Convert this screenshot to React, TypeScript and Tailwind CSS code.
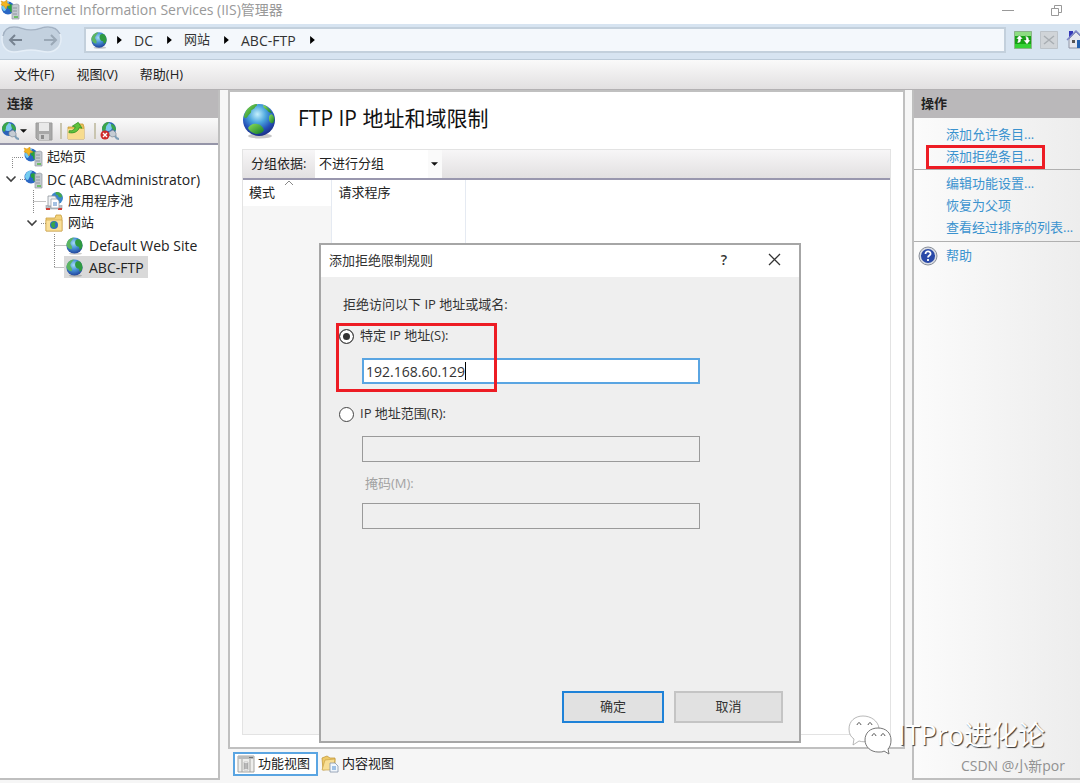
import { useState } from 'react';

type IconProps = { className?: string };

function Globe({ className = 'size-5' }: IconProps) {
  return (
    <svg viewBox="0 0 34 36" className={className} aria-hidden="true">
      <defs>
        <radialGradient id="sea" cx="45%" cy="32%" r="68%">
          <stop offset="0" stopColor="#c4f0fc" />
          <stop offset="0.4" stopColor="#4aa5dd" />
          <stop offset="0.75" stopColor="#2450b8" />
          <stop offset="1" stopColor="#1b2f86" />
        </radialGradient>
        <linearGradient id="land" x1="0" y1="0" x2="1" y2="1">
          <stop offset="0" stopColor="#8fe05a" />
          <stop offset="1" stopColor="#0f7a26" />
        </linearGradient>
      </defs>
      <ellipse cx="18" cy="33" rx="12" ry="2.5" fill="#000" opacity="0.22" />
      <circle cx="17" cy="17" r="16" fill="url(#sea)" />
      <path d="M2 14C3 7 8 2 14 1c2 0 1 2-1 3 0 2-3 2-4 4 1 2-2 3-3 5-1 2-3 3-4 1z" fill="url(#land)" />
      <path d="M28 12c2-2 3 0 4 2 1 2 0 5-1 6-2 1-4-1-4-4 0-2 0-3 1-4z" fill="url(#land)" />
      <path d="M6 25c2-3 5-5 9-4 3 0 6 3 7 6-1 3-5 4-8 4-4-1-7-3-8-6z" fill="url(#land)" />
      <path d="M21 2c4 1 7 4 9 8-2 0-4-1-5-3-2-1-4-3-4-5z" fill="url(#land)" />
    </svg>
  );
}

function SmallGlobe({ className = 'size-5' }: IconProps) {
  return (
    <svg viewBox="0 0 20 20" className={className} aria-hidden="true">
      <defs>
        <radialGradient id="smallSea" cx="45%" cy="35%" r="65%">
          <stop offset="0" stopColor="#a6dcf5" />
          <stop offset="0.5" stopColor="#4690d6" />
          <stop offset="1" stopColor="#22459c" />
        </radialGradient>
      </defs>
      <ellipse cx="11" cy="18.500" rx="7" ry="1.300" fill="#000" opacity="0.2" />
      <circle cx="10" cy="10" r="8.500" fill="url(#smallSea)" />
      <path d="M1.500 9C2 5 5 2 9 1.500c1 1-2 2-2 3.500-1 1-2 2-1 4 1 1 2 3 1 5-3 0-5-2-5.500-5z" fill="#5bb562" />
      <path d="M11 5c1-2 4-2 5-1 2 2 3 5 2 8-1 2-3 3-3 1s-1-2-2-2c-2-1-3-4-2-6z" fill="#2f9a40" />
    </svg>
  );
}

function ServerIcon({ className = 'size-5', star = false }: IconProps & { star?: boolean }) {
  return (
    <svg viewBox="0 0 20 20" className={className} aria-hidden="true">
      <circle cx="8" cy="8" r="6.5" fill="#2a67c4" />
      <path d="M2 7c1-4 4-6 7-5 0 2-2 2-2 4s-1 3-2 5c-2 0-3-2-3-4z" fill="#74cdf0" />
      <path d="M8 5c2-1 4-1 5 1v6c-3 1-3-1-3-3-2 0-3-2-2-4z" fill="#27a03f" />
      {star && <path d="M1 1l3 1 3-2v3l3 2-3 1-1 3-2-3-3-1 1-2z" fill="#f3b521" stroke="#d18f10" strokeWidth="0.5" />}
      <path d="M12 5l5-1 2 1v14h-7z" fill="#c3c9cf" stroke="#939aa1" strokeWidth="0.7" />
      <path d="M13 8h4M13 11h4M13 14h4" stroke="#828b94" strokeWidth="0.8" />
      <path d="M14 17h4" stroke="#54b948" strokeWidth="1.500" />
    </svg>
  );
}

function PoolIcon() {
  return (
    <svg viewBox="0 0 20 20" className="size-5" aria-hidden="true">
      <circle cx="13" cy="7" r="6" fill="#3b86ca" />
      <path d="M12 1c4 0 6 2 6 5-2 1-4 0-4-2-2 0-3-1-2-3z" fill="#46a84b" />
      <path d="M2 14v4h16v-4" fill="#b9c0c7" stroke="#9aa2aa" strokeWidth="0.6" />
      <path d="M2 17h4v2H2zM14 17h4v2h-4z" fill="#cf3d35" />
      <path d="M4 5h7l2 3v7H4z" fill="#f1f3f5" stroke="#8f969d" strokeWidth="0.8" />
      <path d="M7 8h6l2 2v7H7z" fill="#fff" stroke="#9aa2aa" strokeWidth="0.8" />
      <path d="M9 12h4M9 14h4" stroke="#4a83c4" />
    </svg>
  );
}

function SitesIcon() {
  return (
    <svg viewBox="0 0 20 20" className="size-5" aria-hidden="true">
      <path d="M2 5h9l1-3h5l1 3v13H2z" fill="#f3d27a" stroke="#c9a040" strokeWidth="0.8" />
      <path d="M2 7h16v11H2z" fill="#fae09a" stroke="#c9a040" strokeWidth="0.6" />
      <circle cx="10" cy="12" r="4" fill="#2e6fc0" />
      <path d="M7 11c1-2 3-3 5-2-1 1-2 2-1 3 1 2-1 3-2 3-1-1-2-2-2-4z" fill="#38a548" />
    </svg>
  );
}

function ConnectIcon({ remove = false }: { remove?: boolean }) {
  return (
    <svg viewBox="0 0 20 20" className="size-5" aria-hidden="true">
      <circle cx="9" cy="8" r="7" fill="#2b62ba" />
      <circle cx="8" cy="6" r="4" fill="#7cc8ee" />
      <path d="M2 7c1-4 4-6 7-6 0 2-3 3-3 5 0 3-1 4-2 5-1-1-2-2-2-4z" fill="#3aa54a" />
      <path d="M11 3c3 0 5 3 5 6-2 2-5-2-5-6z" fill="#3aa54a" />
      <path d="M9 11l4-2 3 3v3l-4 1-3-2z" fill="#c5ccd4" stroke="#7d8893" strokeWidth="0.7" />
      <path d="M15 15c1 2 2 3 4 3" stroke="#7fa0b8" strokeWidth="2" fill="none" />
      {remove && (
        <g>
          <circle cx="5" cy="14" r="4.5" fill="#cf2a2a" />
          <path d="M3 12l4 4m0-4l-4 4" stroke="#fff" strokeWidth="1.4" />
        </g>
      )}
    </svg>
  );
}

function SaveIcon() {
  return (
    <svg viewBox="0 0 20 20" className="size-5" aria-hidden="true">
      <path d="M2 2h16v17H4l-2-2z" fill="#a8a8a8" stroke="#9a9a9a" />
      <path d="M5 2h10v8H5z" fill="#e9e9e9" />
      <path d="M5 13h10v6H5z" fill="#cfcfcf" />
      <path d="M7 14h3v4H7z" fill="#8c8c8c" />
    </svg>
  );
}

function FolderUpIcon() {
  return (
    <svg viewBox="0 0 20 20" className="size-5" aria-hidden="true">
      <path d="M2 6h8l2-3h5l1 3v12H2z" fill="#e9c15d" stroke="#c79b35" strokeWidth="0.8" />
      <path d="M2 8h16v10H2z" fill="#f7dc8e" />
      <path d="M4 11c3 0 5-2 5-5H6l5-5 5 5h-3c0 4-4 7-9 7z" fill="#5fc23c" stroke="#2f8f22" strokeWidth="0.7" transform="rotate(12 10 7)" />
    </svg>
  );
}

function WeChatIcon() {
  return (
    <svg viewBox="0 0 44 40" className="h-10 w-11" aria-hidden="true">
      <path d="M15 1C7 1 1 6 1 14c0 5 2 8 5 10l-1 6 6-4c3 1 7 1 10 0L31 13C30 6 23 1 15 1z" fill="#fff" stroke="#9a9a9a" strokeWidth="0.7" />
      <path d="M30 13c-8 0-13 5-13 12s6 12 13 12c3 0 5 0 6-1l5 3-1-5c2-2 3-5 3-9 0-7-5-12-13-12z" fill="#fff" stroke="#666" strokeWidth="0.9" />
      <path d="M9 10c1-3 3-3 4 0M20 10c1-3 3-3 4 0M24 21c1-3 3-3 4 0M33 21c1-3 3-3 4 0" stroke="#555" fill="none" />
    </svg>
  );
}

function Arrow({ className = '' }: IconProps) {
  return (
    <svg viewBox="0 0 6 10" className={`h-2 w-[5px] shrink-0 ${className}`} aria-hidden="true">
      <path d="M0 0l6 5-6 5z" fill="#000" />
    </svg>
  );
}

function DownArrow() {
  return (
    <svg viewBox="0 0 8 4" className="h-1 w-[7px] shrink-0" aria-hidden="true">
      <path d="M0 0h8L4 4z" fill="#111" />
    </svg>
  );
}

function Chevron() {
  return (
    <svg viewBox="0 0 12 8" className="h-2 w-3" aria-hidden="true">
      <path d="M1.500 1.500L6 6l4.500-4.500" stroke="#404040" strokeWidth="1.600" fill="none" />
    </svg>
  );
}

function TitleBar() {
  return (
    <header className="flex h-6 items-center bg-white pb-1 text-[#999]">
      <ServerIcon className="size-5 shrink-0" star />
      <h1 className="ml-[3px] whitespace-nowrap text-[14px] leading-5">Internet Information Services (IIS)管理器</h1>
      <div className="ml-auto flex items-center gap-9 pr-[17px]">
        <button type="button" aria-label="最小化" className="flex h-5 w-3 items-center">
          <span className="h-px w-3 bg-[#999]" />
        </button>
        <button type="button" aria-label="还原">
          <svg viewBox="0 0 13 13" className="size-[13px]" fill="none" stroke="#999">
            <path d="M1.500 4.500h7v7h-7zM4.500 4V1.500h7v7H9" />
          </svg>
        </button>
      </div>
    </header>
  );
}

function AddressBar() {
  return (
    <nav className="flex h-9 items-center border-b border-[#bccbd9] bg-[#d7e4f1] pb-[3px]">
      <div className="relative h-7 w-[62px] shrink-0">
        <svg viewBox="0 0 62 28" className="absolute inset-0 h-7 w-[62px]" aria-hidden="true">
          <path d="M14 1c7 0 9 3 17 3s10-3 17-3c8 0 13 5 13 12s-5 13-13 13c-7 0-9-2-17-2s-10 2-17 2C7 26 2 21 2 13S7 1 14 1z" fill="#c3d1df" stroke="#e5eef7" strokeWidth="1.500" />
          <path d="M3 10C4 4 8 1 14 1c7 0 9 3 17 3s10-3 17-3c6 0 10 3 12 7" stroke="#a3b2c3" strokeWidth="1.500" fill="none" />
        </svg>
        <div className="relative flex h-full items-center justify-between px-2">
          <button type="button" aria-label="后退">
            <svg viewBox="0 0 14 12" className="h-3 w-[14px]" fill="none" stroke="#778391" strokeWidth="2">
              <path d="M14 6H1.500M7 1L2 6l5 5" />
            </svg>
          </button>
          <button type="button" aria-label="前进" className="-mr-1">
            <svg viewBox="0 0 14 12" className="h-3 w-[14px]" fill="none" stroke="#9aa8b6" strokeWidth="2">
              <path d="M0 6h12.500M7 1l5 5-5 5" />
            </svg>
          </button>
        </div>
      </div>
      <div className="ml-[22px] flex h-[26px] flex-1 items-center border-2 border-[#c3d0dc] bg-[#f4f8fc] pl-1 text-[14px] text-[#333]">
        <SmallGlobe className="size-[18px]" />
        <Arrow className="ml-[9px]" />
        <a href="#dc" className="ml-3">DC</a>
        <Arrow className="ml-[14px]" />
        <a href="#sites" className="ml-3 text-[13px]">网站</a>
        <Arrow className="ml-[14px]" />
        <a href="#ftp" className="ml-3">ABC-FTP</a>
        <Arrow className="ml-[14px]" />
      </div>
      <div className="flex w-[74px] shrink-0 items-center gap-2 overflow-hidden pl-2">
        <button type="button" aria-label="刷新" className="shrink-0">
          <svg viewBox="0 0 18 18" className="size-[18px]">
            <path d="M0.500 0.500h17v17h-17z" fill="#14a514" stroke="#8bb38b" />
            <path d="M1 1h16v4H1z" fill="#8ddc82" />
            <path d="M1 13h16v4H1z" fill="#35d235" />
            <path d="M8 4C4 4 4 6 4 8H2l3.500 4L9 8H7c0-1 0-2 1-4z" fill="#fff" stroke="#176c17" strokeWidth="0.400" transform="rotate(180 5.500 8)" />
            <path d="M11 5c3 0 4 2 4 4h1.500L13 13.500 9.500 9H12c0-1 0-3-1-4z" fill="#fff" stroke="#176c17" strokeWidth="0.400" />
          </svg>
        </button>
        <button type="button" aria-label="停止" disabled className="shrink-0">
          <svg viewBox="0 0 18 18" className="size-[18px]">
            <path d="M0.500 0.500h17v17h-17z" fill="#d0d4d8" stroke="#bdc3c9" />
            <path d="M4 5l10 8M14 5L4 13" stroke="#a9aeb3" strokeWidth="1.500" />
          </svg>
        </button>
        <button type="button" aria-label="主页" className="shrink-0">
          <svg viewBox="0 0 20 20" className="size-5">
            <path d="M3 1h4v7H3z" fill="#3438b8" />
            <path d="M3 9l7-7 7 7v9H3z" fill="#e6e8ee" stroke="#8e94a5" />
            <path d="M1 10l9-9 9 9" stroke="#7f86c9" strokeWidth="1.500" fill="none" />
            <path d="M6 10h3v3H6z" fill="#555" />
            <path d="M11 10h4v8h-4z" fill="#2461ae" />
          </svg>
        </button>
      </div>
    </nav>
  );
}

function MenuBar() {
  return (
    <div className="flex h-[30px] items-center gap-[22px] border-b border-[#b3b1b3] bg-gradient-to-b from-[#fafafa] to-[#e2e0e1] pl-[14px] text-[13px] text-[#222]">
      <button type="button">文件(F)</button>
      <button type="button">视图(V)</button>
      <button type="button">帮助(H)</button>
    </div>
  );
}

function PanelHeader({ title }: { title: string }) {
  return <h2 className="flex h-7 items-center bg-[#bab8ba] pl-[7px] text-[13px] font-bold text-[#222]">{title}</h2>;
}

function ConnectionsPanel() {
  const row = 'flex h-[22px] items-center whitespace-nowrap';
  return (
    <aside className="mb-[3px] flex w-55 shrink-0 flex-col border-r-2 border-b-2 border-[#bfbfbf] bg-white">
      <PanelHeader title="连接" />
      <div className="flex h-[27px] items-center border-b-2 border-[#9595a8] bg-gradient-to-b from-[#fafafa] to-[#e2e0e1]">
        <button type="button" aria-label="连接" className="flex items-center">
          <ConnectIcon />
          <DownArrow />
        </button>
        <button type="button" aria-label="保存" disabled className="ml-[7px]"><SaveIcon /></button>
        <span className="ml-[6px] h-4 w-0.5 bg-[#c9c5b0]" />
        <button type="button" aria-label="向上" className="ml-1"><FolderUpIcon /></button>
        <span className="ml-2 h-4 w-0.5 bg-[#c9c5b0]" />
        <button type="button" aria-label="删除连接" className="ml-1"><ConnectIcon remove /></button>
      </div>
      <div className="relative mt-px text-[13px] text-[#222]">
        <svg viewBox="0 0 100 132" className="absolute left-0 top-0 h-[132px] w-[100px]" aria-hidden="true">
          <path d="M12.500 22V11.500H24M20 33.500h6M33.500 44v23M33.500 55.500H46M41 77.500h5M54.500 88v34M54.500 99.500H67M54.500 121.500H67" stroke="#888" strokeDasharray="1 1" fill="none" />
        </svg>
        <ul className="relative">
          <li className={`${row} pl-[23px]`}><ServerIcon star /><span className="ml-1">起始页</span></li>
          <li className={`${row} pl-[5px] text-[14px]`}>
            <button type="button" aria-label="折叠"><Chevron /></button>
            <ServerIcon className="ml-[6px] size-5" /><span className="ml-1">DC (ABC\Administrator)</span>
          </li>
          <li className={`${row} pl-11`}><PoolIcon /><span className="ml-1">应用程序池</span></li>
          <li className={`${row} pl-[26px]`}>
            <button type="button" aria-label="折叠" className="mr-[6px]"><Chevron /></button>
            <SitesIcon /><span className="ml-1">网站</span>
          </li>
          <li className={`${row} pl-[65px] text-[14px]`}><SmallGlobe className="size-[19px]" /><span className="ml-[5px]">Default Web Site</span></li>
          <li className={`${row} pl-16 text-[14px]`}>
            <span className="flex h-[22px] items-center bg-[#d9d9d9] pl-px pr-1"><SmallGlobe className="size-[19px]" /><span className="ml-[5px]">ABC-FTP</span></span>
          </li>
        </ul>
      </div>
    </aside>
  );
}

function FeaturePage() {
  return (
    <div className="flex min-w-0 flex-1 flex-col">
      <main className="flex flex-1 flex-col border-2 border-[#c0c0c0] bg-white px-3 pb-3">
        <div className="flex h-[57px] items-center gap-[22px]">
          <Globe className="h-9 w-[34px]" />
          <h2 className="pb-1 text-[21px] text-[#111]">FTP IP 地址和域限制</h2>
        </div>
        <div className="flex flex-1 flex-col border border-[#e3e3e3]">
          <div className="flex h-[30px] items-stretch border-b-2 border-[#9997ae] bg-gradient-to-b from-[#f7f6f7] to-[#e2e0e1] pl-2 text-[13px] text-[#222]">
            <label htmlFor="group" className="flex w-16 items-center whitespace-nowrap">分组依据:</label>
            <div className="relative w-[127px]">
              <select id="group" className="h-full w-full appearance-none bg-white pl-1 outline-none">
                <option>不进行分组</option>
              </select>
              <span className="pointer-events-none absolute right-0 top-0 flex h-full w-[14px] items-center bg-[#fafafa] pl-[3px]"><DownArrow /></span>
            </div>
          </div>
          <div className="flex flex-1">
            <table className="w-full table-fixed border-collapse text-left text-[13px] text-[#222]">
              <colgroup>
                <col className="w-[88px]" />
                <col className="w-[134px]" />
                <col />
              </colgroup>
              <thead>
                <tr className="h-[26px]">
                  <th className="relative border-r border-[#e5eaf2] pl-[6px] font-normal">
                    模式
                    <svg viewBox="0 0 10 6" className="absolute left-[41px] top-0 h-[6px] w-[10px]" aria-hidden="true">
                      <path d="M1 5l4-4 4 4" stroke="#888" fill="none" />
                    </svg>
                  </th>
                  <th className="border-r border-[#e5eaf2] pl-[7px] font-normal">请求程序</th>
                  <th />
                </tr>
              </thead>
              <tbody>
                <tr>
                  <td className="border-r border-[#e5eaf2] bg-[#f6f6f6]" />
                  <td className="border-r border-[#e5eaf2]" />
                  <td />
                </tr>
              </tbody>
            </table>
          </div>
        </div>
      </main>
      <div className="flex h-[34px] items-center gap-px pb-1 pl-[5px] text-[13px] text-[#222]">
        <button type="button" className="flex h-6 items-center gap-[3px] border-2 border-[#5aa5e2] bg-white pl-[2px] pr-[6px]">
          <svg viewBox="0 0 18 18" className="size-[18px]" aria-hidden="true">
            <path d="M1 1h16v16H1z" fill="#eeeeec" stroke="#a5a5a2" />
            <path d="M1 1h16v3H1z" fill="#b9bbbb" />
            <path d="M5 4v13M13 4v13" stroke="#a5a5a2" />
            <path d="M7 7h4v8H7z" fill="#fff" stroke="#999" strokeWidth="0.500" />
            <path d="M7 9h4M7 11h4M7 13h4M12 2.500h4" stroke="#737373" />
          </svg>
          功能视图
        </button>
        <button type="button" className="flex h-6 items-center gap-[3px] px-[2px]">
          <svg viewBox="0 0 18 18" className="size-[18px]" aria-hidden="true">
            <path d="M1 3l5-2 3 2h5v10L2 15z" fill="#eec967" stroke="#c49b3c" strokeWidth="0.800" />
            <path d="M4 5l10-1-2 11H1z" fill="#f8de95" stroke="#c49b3c" strokeWidth="0.600" />
            <path d="M9 8h5l3 3v6H9z" fill="#f2f7fc" stroke="#8696ab" strokeWidth="0.800" />
            <path d="M11 12h4M11 14h4" stroke="#4d8bd0" />
          </svg>
          内容视图
        </button>
      </div>
    </div>
  );
}

function ActionsPanel() {
  const link = 'flex h-[22px] items-center whitespace-nowrap pl-8';
  return (
    <aside className="mb-[3px] flex w-42 shrink-0 flex-col overflow-hidden border-b-2 border-l-2 border-[#bfbfbf] bg-gradient-to-r from-[#fbfbfb] to-[#ededed]">
      <PanelHeader title="操作" />
      <div className="text-[13px] text-[#3b93cf]">
        <div className="border-b border-[#b0b0b0] pb-px pt-[6px]">
          <a href="#allow" className={link}>添加允许条目...</a>
          <div className="relative">
            <a href="#deny" className={link}>添加拒绝条目...</a>
            <span className="pointer-events-none absolute -top-px left-3 h-6 w-[119px] border-[3px] border-[#ed1c24]" />
          </div>
        </div>
        <div className="border-b border-[#b0b0b0] pb-[2px] pt-[3px]">
          <a href="#settings" className={link}>编辑功能设置...</a>
          <a href="#revert" className={link}>恢复为父项</a>
          <a href="#ordered" className={link}>查看经过排序的列表...</a>
        </div>
        <a href="#help" className="flex items-center gap-2 pl-1 pt-1">
          <svg viewBox="0 0 20 20" className="size-5" aria-hidden="true">
            <circle cx="10" cy="10" r="9" fill="#d9dce3" stroke="#888e99" />
            <circle cx="10" cy="10" r="7" fill="#2949a8" />
            <path d="M7.500 8c0-4 5.500-3 5 0-.3 1.500-2.500 1.500-2.500 3.500M10 13v2" stroke="#fff" strokeWidth="1.800" fill="none" />
          </svg>
          帮助
        </a>
      </div>
    </aside>
  );
}

function DenyRuleDialog() {
  const [mode, setMode] = useState('single');
  const [ip, setIp] = useState('192.168.60.129');
  const radio = 'size-[15px] shrink-0 appearance-none rounded-full border border-[#444] bg-white checked:bg-[#333] checked:shadow-[inset_0_0_0_3px_#fff]';
  const disabledInput = 'ml-[41px] block h-[26px] w-[338px] border border-[#9a9a9a] bg-[#efefef] px-1';

  return (
    <div role="dialog" aria-labelledby="dialog-title" className="absolute left-[319px] top-[243px] flex h-[500px] w-[482px] flex-col border-2 border-[#a6a6a6] bg-[#efefef] text-[13px] text-[#333]">
      <div className="flex h-8 shrink-0 items-center bg-white pl-2">
        <h2 id="dialog-title">添加拒绝限制规则</h2>
        <button type="button" aria-label="帮助" className="ml-auto w-[50px] pb-1 text-[14px] font-semibold">?</button>
        <button type="button" aria-label="关闭" className="flex w-[50px] justify-center pb-1">
          <svg viewBox="0 0 13 13" className="size-[13px]" stroke="#333" strokeWidth="1.300">
            <path d="M1 1l11 11M12 1L1 12" />
          </svg>
        </button>
      </div>
      <form className="flex flex-1 flex-col pt-4" onSubmit={(e) => e.preventDefault()}>
        <p className="flex h-6 items-center pl-[22px]">拒绝访问以下 IP 地址或域名:</p>
        <div className="relative mt-[7px]">
          <label className="flex h-6 items-center gap-[6px] pl-[18px]">
            <input type="radio" name="mode" className={radio} checked={mode === 'single'} onChange={() => setMode('single')} />
            特定 IP 地址(S):
          </label>
          <div className="relative ml-[41px] mt-[10px] w-[338px]">
            <input
              type="text"
              aria-label="特定 IP 地址(S)"
              value={ip}
              onChange={(e) => setIp(e.target.value)}
              className="block h-[26px] w-full border-2 border-[#5aa5e2] bg-white px-[2px] text-[14px] outline-none"
            />
            <span className="pointer-events-none absolute left-[103px] top-[4px] h-[18px] w-px bg-black" />
          </div>
          <span className="pointer-events-none absolute left-[15px] -top-px h-[69px] w-[161px] border-[3px] border-[#ed1c24]" />
        </div>
        <label className="mt-[18px] flex h-6 items-center gap-[6px] pl-[18px]">
          <input type="radio" name="mode" className={radio} checked={mode === 'range'} onChange={() => setMode('range')} />
          IP 地址范围(R):
        </label>
        <input type="text" aria-label="IP 地址范围(R)" disabled className={`${disabledInput} mt-[10px]`} />
        <label htmlFor="mask" className="mt-[10px] flex h-6 items-center pl-[44px] text-[#a3a3a3]">掩码(M):</label>
        <input id="mask" type="text" disabled className={`${disabledInput} mt-[7px]`} />
        <div className="mt-auto flex justify-end gap-[10px] pb-[18px] pr-4">
          <button type="submit" className="h-8 w-[102px] border-2 border-[#1e82d8] bg-[#e1e1e1]">确定</button>
          <button type="button" className="h-8 w-[109px] border-2 border-[#c4c4c4] bg-[#e1e1e1]">取消</button>
        </div>
      </form>
    </div>
  );
}

function Watermark() {
  return (
    <div className="pointer-events-none absolute bottom-[7px] right-[15px] flex flex-col items-end">
      <div className="mr-5 flex items-center gap-[6px]">
        <WeChatIcon />
        <span className="whitespace-nowrap text-[27px] leading-[42px] text-white [text-shadow:1px_1px_1px_#333]">ITPro进化论</span>
      </div>
      <span className="text-[14px] leading-5 text-[#919191]">CSDN @小新por</span>
    </div>
  );
}

export default function App() {
  return (
    <div className="relative flex min-h-screen flex-col overflow-hidden bg-[#f6f6f6] font-['Open_Sans','Noto_Sans_CJK_SC',sans-serif]">
      <TitleBar />
      <AddressBar />
      <MenuBar />
      <div className="flex flex-1">
        <ConnectionsPanel />
        <div className="ml-2 mr-[7px] flex min-w-0 flex-1">
          <FeaturePage />
        </div>
        <ActionsPanel />
      </div>
      <DenyRuleDialog />
      <Watermark />
    </div>
  );
}
